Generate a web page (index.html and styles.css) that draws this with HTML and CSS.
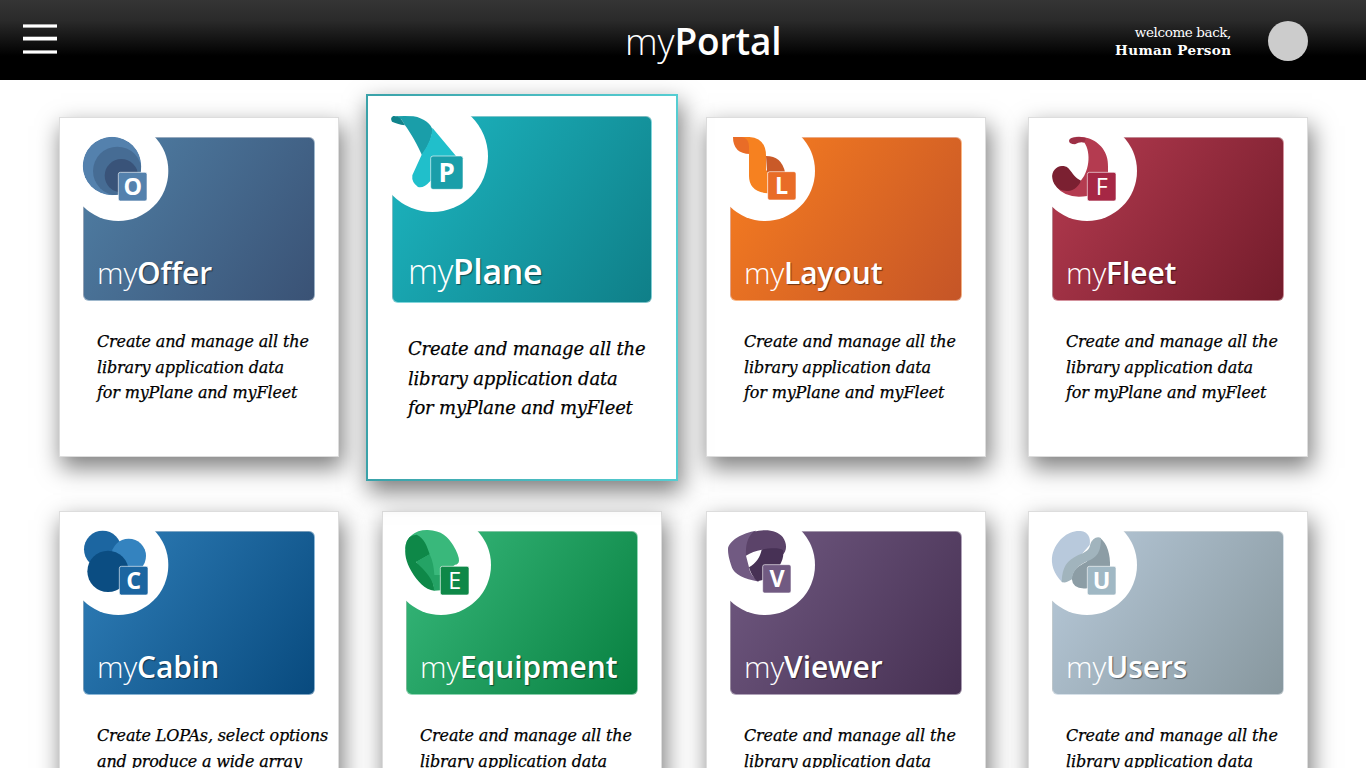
FILE: index.html
```
<!DOCTYPE html>
<html lang="en">
<head>
<meta charset="utf-8">
<title>myPortal</title>
<link rel="stylesheet" href="styles.css">
</head>
<body>
<header class="topbar">
  <button class="menu" aria-label="Menu"><svg width="34" height="30" viewBox="0 0 34 30" fill="#fff"><rect y=".4" width="34" height="3.2"/><rect y="12.7" width="34" height="3.8"/><rect y="26.4" width="34" height="3.2"/></svg></button>
  <h1 class="brand"><span class="my">my</span><b>Portal</b></h1>
  <div class="user"><p class="welcome">welcome back,<strong>Human Person</strong></p><span class="avatar"></span></div>
</header>
<main class="grid">
  <article class="card">
    <div class="tile offer">
      <svg class="logo" viewBox="99 81 300 270"><clipPath id="oc"><circle cx="186" cy="168" r="88"/></clipPath><circle cx="205" cy="183" r="150" fill="#fff"/><g clip-path="url(#oc)"><circle cx="186" cy="168" r="88" fill="#5481ad"/><circle cx="202" cy="183" r="73" fill="#466c94"/><circle cx="214" cy="197" r="50" fill="#395379"/></g><rect class="badge" x="205" y="187" width="86" height="86" rx="6" fill="#5481ad"/><text x="248" y="254">O</text></svg>
      <h2><span class="my">my</span><b>Offer</b></h2>
    </div>
    <p class="desc">Create and manage all the<br>library application data<br>for myPlane and myFleet</p>
  </article>
  <article class="card featured">
    <div class="tile plane">
      <svg class="logo" viewBox="111 93 300 270"><circle cx="232" cy="214" r="167" fill="#fff"/><path fill="#1a9ea9" d="M122 94Q150 92 175 94C208 99 230 120 232 134C232 162 216 188 201 211C190 185 165 140 150 121L140 104Z"/><path fill="#10838b" d="M115 93Q136 91 150 121Q125 117 111 110Q104 98 115 93Z"/><path fill="#20bfcb" d="M232 128L303 213L240 285L226 288Q206 311 189 306Q169 292 172 271L201 207Q232 164 232 128Z"/><rect class="badge" x="227" y="213" width="97" height="100" rx="7" fill="#1a9ea9"/><text class="big" x="275" y="291">P</text></svg>
      <h2><span class="my">my</span><b>Plane</b></h2>
    </div>
    <p class="desc">Create and manage all the<br>library application data<br>for myPlane and myFleet</p>
  </article>
  <article class="card">
    <div class="tile layout">
      <svg class="logo" viewBox="90 81 300 270"><circle cx="195" cy="183" r="150" fill="#fff"/><path fill="#e96c27" d="M99 81H150V132Q99 131 99 81Z"/><path fill="#f68120" d="M125 81H148Q198 85 198 137V180L203 185V250Q147 245 147 198V110Q147 85 125 81Z"/><path fill="#c95a28" d="M198 138Q245 138 255 187H201Z"/><rect class="badge" x="203" y="185" width="85" height="85" rx="6" fill="#e96c27"/><text x="245" y="251">L</text></svg>
      <h2><span class="my">my</span><b>Layout</b></h2>
    </div>
    <p class="desc">Create and manage all the<br>library application data<br>for myPlane and myFleet</p>
  </article>
  <article class="card">
    <div class="tile fleet">
      <svg class="logo" viewBox="96 81 300 270"><circle cx="201" cy="183" r="150" fill="#fff"/><path fill="#b43b50" d="M165 81Q190 79 205 85C240 96 266 128 264 170V190L202 258Q140 268 110 232L180 215C206 188 216 130 192 96Z"/><path fill="#9d2f45" d="M147 92Q149 79 180 81L198 84L193 98Q180 94 165 103Q147 102 147 92Z"/><path fill="#7b2031" d="M97 205C93 185 110 167 127 168C154 168 150 195 183 212C168 246 140 247 118 238Q99 225 97 205Z"/><rect class="badge" x="202" y="187" width="86" height="86" rx="6" fill="#a62745"/><text class="regular" x="245" y="254">F</text></svg>
      <h2><span class="my">my</span><b>Fleet</b></h2>
    </div>
    <p class="desc">Create and manage all the<br>library application data<br>for myPlane and myFleet</p>
  </article>
  <article class="card">
    <div class="tile cabin">
      <svg class="logo" viewBox="99 93 300 270"><circle cx="205" cy="195" r="150" fill="#fff"/><circle cx="158" cy="148" r="56" fill="#1c66a1"/><circle cx="236" cy="168" r="52" fill="#3483bf"/><circle cx="174" cy="214" r="62" fill="#0b4d82"/><rect class="badge" x="208" y="199" width="86" height="86" rx="6" fill="#1c66a1"/><text x="251" y="266">C</text></svg>
      <h2><span class="my">my</span><b>Cabin</b></h2>
    </div>
    <p class="desc">Create LOPAs, select options<br>and produce a wide array<br>of outputs</p>
  </article>
  <article class="card">
    <div class="tile equipment">
      <svg class="logo" viewBox="93 93 300 270"><circle cx="198" cy="195" r="150" fill="#fff"/><path fill="#39b87b" d="M91 145C92 112 120 89 158 90C200 91 220 112 234 135Q252 165 252 182Q251 193 240 194L196 230L170 240L120 180Z"/><path fill="#0e8848" d="M125 104C148 115 157 140 164 163L123 186C150 205 178 235 178 272C150 270 125 240 110 215C92 185 88 160 92 135Q98 104 125 104Z"/><path fill="#24a365" d="M123 186L164 163Q176 188 178 225H197V271L177 272C178 240 151 213 123 186Z"/><rect class="badge" x="196" y="199" width="86" height="86" rx="6" fill="#0e8848"/><text class="regular" x="239" y="266">E</text></svg>
      <h2><span class="my">my</span><b>Equipment</b></h2>
    </div>
    <p class="desc">Create and manage all the<br>library application data<br>for myPlane and myFleet</p>
  </article>
  <article class="card">
    <div class="tile viewer">
      <svg class="logo" viewBox="90 93 300 270"><circle cx="195" cy="195" r="150" fill="#fff"/><path fill="#715a82" d="M84 148C84 122 130 98 168 92L143 130L138 167L147 202C150 220 158 232 178 245C130 237 102 220 96 203C86 175 84 160 84 148Z"/><path fill="#5b4369" d="M160 95C200 85 233 92 248 111C263 132 260 155 247 165L186 149Q158 154 138 167C136 130 145 110 160 95Z"/><path fill="#473155" d="M185 149C210 144 240 143 249 151C252 165 248 180 240 195L188 240L172 244Q155 230 147 202C168 190 180 172 185 149Z"/><rect class="badge" x="188" y="194" width="85" height="85" rx="6" fill="#715a82"/><text x="231" y="260">V</text></svg>
      <h2><span class="my">my</span><b>Viewer</b></h2>
    </div>
    <p class="desc">Create and manage all the<br>library application data<br>for myPlane and myFleet</p>
  </article>
  <article class="card">
    <div class="tile users">
      <svg class="logo" viewBox="96 93 300 270"><circle cx="201" cy="195" r="150" fill="#fff"/><path fill="#b8c9dc" d="M128 248C100 222 92 190 97 165C108 120 145 90 182 93C205 95 213 115 209 135L170 180L130 215Z"/><path fill="#8c9da5" d="M240 113C262 130 272 165 270 200L202 265Q158 270 155 235C158 208 175 198 200 185Z"/><path fill="#a1b4bd" d="M211 133C215 118 232 106 243 115C243 165 225 175 195 187C165 202 158 220 156 238Q135 252 125 245C127 200 140 182 175 165C198 157 208 150 211 133Z"/><rect class="badge" x="202" y="199" width="86" height="86" rx="6" fill="#a0b8c4"/><text x="245" y="266">U</text></svg>
      <h2><span class="my">my</span><b>Users</b></h2>
    </div>
    <p class="desc">Create and manage all the<br>library application data<br>for myPlane and myFleet</p>
  </article>
</main>
</body>
</html>
```
FILE: styles.css
```
* { box-sizing: border-box; }
body { margin: 0; height: 768px; overflow: hidden; background: #fff; display: flex; flex-direction: column; }
h1, h2, p { margin: 0; font-weight: 400; }

.topbar {
  flex: none; height: 80px; padding: 0 58px 0 23px;
  display: grid; grid-template-columns: 602px auto 1fr; align-items: center;
  background: linear-gradient(#353535 0, #2b2b2b 20px, #000 56px);
  color: #fff; position: relative; z-index: 2;
}
.menu { justify-self: start; display: block; padding: 0; margin-top: -2px; border: 0; background: none; }
.menu svg { display: block; }
.brand { font: 300 37px/48px "Open Sans", sans-serif; margin-top: 1px; letter-spacing: -.1px; }
.brand b { font-weight: 600; }
.user { justify-self: end; display: flex; align-items: center; gap: 37px; margin-top: 2px; }
.welcome { font: 13.5px/18px "DejaVu Serif", serif; text-align: right; letter-spacing: -.4px; }
.welcome strong { display: block; font-size: 13.5px; letter-spacing: .35px; margin-right: -.35px; }
.avatar { width: 40px; height: 40px; border-radius: 50%; background: #ccc; }

.grid {
  display: grid; grid-template-columns: 323px 324px 322px 280px; grid-auto-rows: 340px;
  row-gap: 54px; padding: 37px 0 0 59px;
}
.card {
  width: 280px; height: 340px; padding: 19px 0 0 23px;
  background: #fff; border: 1px solid #ddd;
  box-shadow: 3px 10px 22px 1px rgba(0, 0, 0, .5);
}
.tile {
  position: relative; width: 232px; height: 164px; border-radius: 6px;
  border: 1px solid rgba(255, 255, 255, .45); background-origin: border-box;
  display: flex; align-items: flex-end; padding: 0 0 6px 13px;
}
.logo { position: absolute; left: -1px; top: -1px; width: 100px; height: 90px; overflow: visible; }
.logo text { font: 700 70px "Open Sans", sans-serif; fill: #fff; text-anchor: middle; }
.logo .regular { font-weight: 500; }
.logo .big { font-size: 78px; }
.badge { stroke: rgba(255, 255, 255, .6); stroke-width: 3; }
.tile h2 {
  position: relative; font: 300 30px/42px "Open Sans", sans-serif; color: #fff;
  letter-spacing: -.1px; white-space: nowrap;
}
.tile b { font-weight: 600; text-shadow: 1px 1px 1px rgba(0, 0, 0, .5); }
.desc {
  margin: 28px 0 0 14px; font: italic 16px/25.7px "DejaVu Serif", serif;
  color: #000; white-space: nowrap; letter-spacing: -.15px; -webkit-text-stroke: .25px #000;
}

.featured {
  position: relative; z-index: 1; width: 312px; height: 387px; margin: -23px 0 0 -16px;
  padding: 20px 0 0 24px; border: 2px solid;
  border-image: linear-gradient(90deg, #3aa2a9, #55cdd2) 1;
}
.featured .tile { width: 260px; height: 187px; padding-left: 15px; padding-bottom: 7px; }
.featured h2 { font-size: 34px; line-height: 48px; letter-spacing: -.4px; }
.featured .desc { margin: 31px 0 0 16px; font-size: 18px; line-height: 29.5px; letter-spacing: -.2px; }

.offer { background: linear-gradient(125deg, #5080a6, #3a5275); }
.plane { background: linear-gradient(125deg, #1db7c2, #0f7f88); }
.layout { background: linear-gradient(125deg, #f87e20, #c55527); }
.fleet { background: linear-gradient(125deg, #b53b50, #731c2b); }
.cabin { background: linear-gradient(125deg, #307fb9, #084a7e); }
.equipment { background: linear-gradient(125deg, #38b97c, #088040); }
.viewer { background: linear-gradient(125deg, #715a82, #463052); }
.users { background: linear-gradient(125deg, #b8cada, #87979e); }
```
